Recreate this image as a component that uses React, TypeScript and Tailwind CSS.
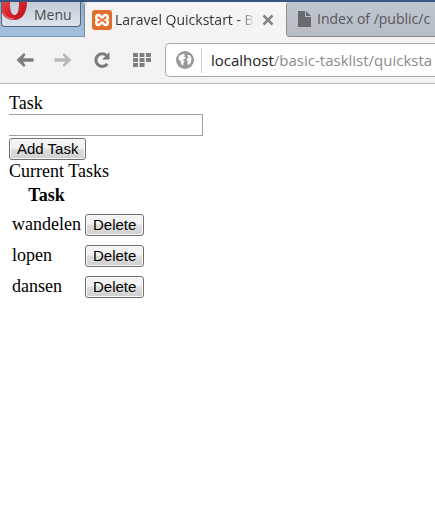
import { useState } from 'react';

const initialTasks = ['wandelen', 'lopen', 'dansen'];

const buttonClass =
  'h-[22px] rounded-[3px] border border-[#707070] bg-linear-to-b from-[#f3f3f3] from-45% via-[#dedede] via-50% to-[#cfcfcf] px-[7px] font-["Liberation_Sans",Arial,sans-serif] text-[15px] leading-[18px] text-black shadow-[inset_0_0_0_1px_#f8f8f8]';

function OperaLogo() {
  return (
    <svg width="27" height="22" viewBox="0 0 27 22" className="shrink-0" aria-hidden="true">
      <defs>
        <linearGradient id="opera" x1="0" y1="0" x2="1" y2="1">
          <stop offset="0" stopColor="#e9565c" />
          <stop offset="0.5" stopColor="#d9232e" />
          <stop offset="1" stopColor="#b5121d" />
        </linearGradient>
      </defs>
      <path
        fillRule="evenodd"
        fill="url(#opera)"
        d="M0 -9H25V0C25 11 20 18 12 18C6 18 2 15 0 11ZM8 -7V1C8 9 9.500 13 12.500 13C16 13 17 8 17 1V-7Z"
      />
      <path d="M1 10.500C4 15 8 17 12 17" fill="none" stroke="#f08b8d" strokeWidth="1" />
    </svg>
  );
}

function XamppIcon() {
  return (
    <svg width="20" height="20" viewBox="0 0 20 20" className="shrink-0" aria-hidden="true">
      <rect width="20" height="20" rx="3" fill="#e0702b" />
      <path
        d="M7 5C4.800 5 4.200 6.200 4.200 7.500C4.200 9 5 9.700 6 10C5 10.300 4.200 11 4.200 12.600C4.200 14 5 15 6.500 15C8.800 15 8.300 12.500 10 12.500C11.700 12.500 11.200 15 13.500 15C15 15 15.800 14 15.800 12.600C15.800 11 15 10.300 14 10C15 9.700 15.800 9 15.800 7.500C15.800 6.200 15.200 5 13 5C11.200 5 11.700 7.500 10 7.500C8.300 7.500 8.800 5 7 5Z"
        fill="none"
        stroke="#fff"
        strokeWidth="2.500"
      />
      <path d="M7.500 10H12.500" stroke="#e0702b" strokeWidth="1.500" />
    </svg>
  );
}

function ArrowIcon({ forward = false }: { forward?: boolean }) {
  return (
    <svg width="18" height="16" viewBox="0 0 18 16" aria-hidden="true">
      <path
        d={
          forward
            ? 'M10 1L17.500 8L10 15L8.500 13.200L11 9.700H0.500V6.300H11L8.500 2.800Z'
            : 'M8 1L0.500 8L8 15L9.500 13.200L7 9.700H17.500V6.300H7L9.500 2.800Z'
        }
        fill={forward ? '#b9b9b9' : '#7b7b7b'}
      />
    </svg>
  );
}

function ReloadIcon() {
  return (
    <svg width="18" height="18" viewBox="0 0 18 18" aria-hidden="true">
      <path d="M13.500 4.500A6.300 6.300 0 1 0 14.300 12.800" fill="none" stroke="#7b7b7b" strokeWidth="3" />
      <path d="M16.500 1V8.500H9Z" fill="#7b7b7b" />
    </svg>
  );
}

function SpeedDialIcon() {
  return (
    <svg width="18" height="14" viewBox="0 0 18 14" fill="#7f7f7f" aria-hidden="true">
      <path d="M0 0h5v4H0zM6.500 0h5v4h-5zM13 0h5v4h-5zM0 5h5v4H0zM6.500 5h5v4h-5zM13 5h5v4h-5zM0 10h5v4H0zM6.500 10h5v4h-5z" />
    </svg>
  );
}

function GlobeIcon() {
  return (
    <svg width="18" height="18" viewBox="0 0 18 18" className="shrink-0" aria-hidden="true">
      <circle cx="9" cy="9" r="9" fill="#989898" />
      <path d="M3 5L6.500 3L9 3.500L8 5.500L10 6.500L8 8.500L6.500 8.500L8.500 10.500L7.500 12L7 15L5 12.500L4.500 10L2.500 8.500Z" fill="#fff" />
      <path d="M11 4.500L13.500 4L15.500 7L15 11L13 14L11.500 13L12 10.500L10.500 9L11.500 7L13 6.500Z" fill="#fff" />
    </svg>
  );
}

function BrowserChrome() {
  return (
    <header className='overflow-hidden border-b border-[#b5b5b5] bg-[#f3f3f3] font-["Open_Sans","Noto_Sans",sans-serif]'>
      <div className="flex h-[37px] border-t-2 border-[#36557f] bg-linear-to-b from-[#8cabca] to-[#a5c1df]">
        <div className="w-[84px] shrink-0 border-b border-[#8299b4] pl-px">
          <button
            type="button"
            className="flex h-[25px] w-[80px] items-start overflow-hidden rounded-b-[4px] border border-t-0 border-[#56677c] bg-linear-to-b from-[#c2cbd6] to-[#dde4ec] text-[14px] leading-[20px] text-[#484d54]"
          >
            <OperaLogo />
            <span className="pl-[5px] pt-[3px]">Menu</span>
          </button>
        </div>
        <nav aria-label="Tabs" className="flex min-w-0 flex-1 bg-[#f3f3f3] text-[14px] leading-[20px]">
          <div className="flex w-[202px] shrink-0 items-center rounded-t-[4px] border-l border-[#7c8795] bg-[#f4f4f4] pl-[7px] text-[#303030]">
            <XamppIcon />
            <a
              href="#tasks"
              className="ml-[3px] w-[140px] whitespace-nowrap bg-linear-to-r from-[#303030] from-88% to-transparent bg-clip-text text-transparent"
            >
              Laravel Quickstart - B
            </a>
            <button type="button" aria-label="Close tab" className="ml-[7px]">
              <svg width="12" height="12" viewBox="0 0 12 12" aria-hidden="true">
                <path d="M1.500 1.500L10.500 10.500M10.500 1.500L1.500 10.500" stroke="#858585" strokeWidth="2.500" />
              </svg>
            </button>
          </div>
          <div className="flex min-w-0 flex-1 items-center overflow-hidden rounded-l-[4px] border-b border-l border-[#898f97] bg-linear-to-b from-[#c0c6d0] to-[#b6bbc4] pl-[11px] text-[#55585e]">
            <svg width="13" height="16" viewBox="0 0 13 16" className="shrink-0" aria-hidden="true">
              <path d="M0 0H7V6H13V16H0ZM8 0L13 5H8Z" fill="#686b70" />
            </svg>
            <a href="#index" className="ml-[6px] whitespace-nowrap">
              Index of /public/c
            </a>
          </div>
        </nav>
      </div>
      <div className="flex h-[46px] items-center pl-4">
        <div className="flex w-[149px] shrink-0 items-center">
          <button type="button" aria-label="Back" className="w-[38px]">
            <ArrowIcon />
          </button>
          <button type="button" aria-label="Forward" className="w-[39px]">
            <ArrowIcon forward />
          </button>
          <button type="button" aria-label="Reload" className="w-[40px]">
            <ReloadIcon />
          </button>
          <button type="button" aria-label="Speed dial">
            <SpeedDialIcon />
          </button>
        </div>
        <div className="flex h-[34px] min-w-0 flex-1 items-center overflow-hidden rounded-l-[5px] border border-r-0 border-[#a8a8a8] bg-white pl-[10px]">
          <GlobeIcon />
          <span className="ml-[7px] h-[25px] w-px shrink-0 bg-[#cfcfcf]" />
          <div className="ml-[9px] whitespace-nowrap text-[15px] leading-[20px] text-[#8b8b8b]">
            <span className="text-[#222]">localhost</span>/basic-tasklist/quicksta
          </div>
        </div>
      </div>
    </header>
  );
}

export default function App() {
  const [tasks, setTasks] = useState(initialTasks);
  const [name, setName] = useState('');

  return (
    <div className="min-h-screen overflow-x-hidden bg-white">
      <BrowserChrome />
      <main
        id="tasks"
        className='px-[9px] pt-[9px] font-["Liberation_Serif","Times_New_Roman",serif] text-[18px] leading-[21px] text-black'
      >
        <form
          onSubmit={(event) => {
            event.preventDefault();
            if (name.trim()) setTasks([...tasks, name.trim()]);
            setName('');
          }}
        >
          <label htmlFor="task-name" className="block">
            Task
          </label>
          <input
            id="task-name"
            type="text"
            value={name}
            onChange={(event) => setName(event.target.value)}
            className='block h-[22px] w-[194px] border border-l-0 border-[#a0a0a0] bg-white px-1 font-["Liberation_Sans",Arial,sans-serif] text-[15px] outline-none'
          />
          <button type="submit" className={`mt-[2px] block ${buttonClass}`}>
            Add Task
          </button>
        </form>
        <div className="pt-px">Current Tasks</div>
        <table className="border-separate border-spacing-[2px]">
          <thead>
            <tr>
              <th className="px-px pt-px pb-[2px] text-center font-bold">Task</th>
              <th className="p-px" aria-label="Actions" />
            </tr>
          </thead>
          <tbody>
            {tasks.map((task, index) => (
              <tr key={index} className="h-[29px]">
                <td className="p-px">{task}</td>
                <td className="p-px align-middle">
                  <button
                    type="button"
                    className={`block ${buttonClass}`}
                    onClick={() => setTasks(tasks.filter((_, i) => i !== index))}
                  >
                    Delete
                  </button>
                </td>
              </tr>
            ))}
          </tbody>
        </table>
      </main>
    </div>
  );
}
